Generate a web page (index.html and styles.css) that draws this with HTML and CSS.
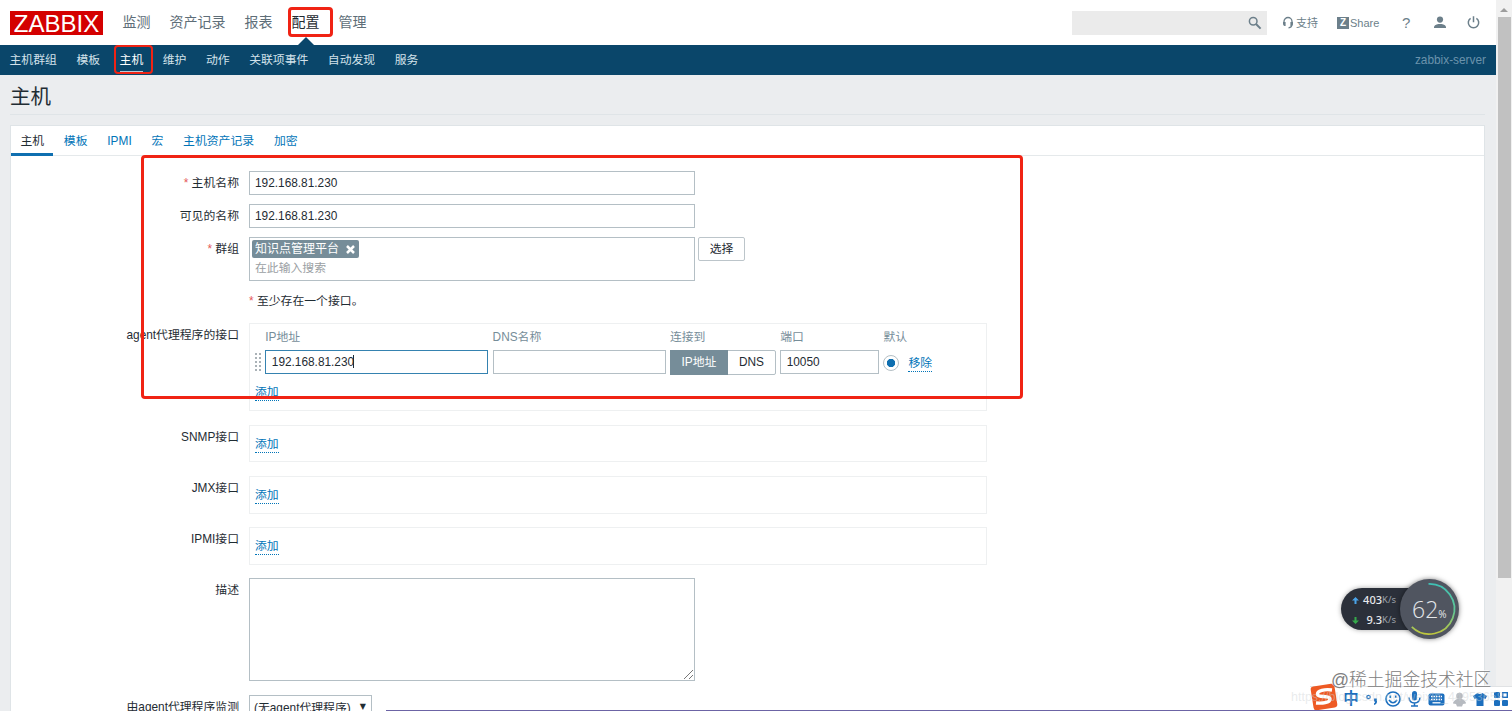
FILE: index.html
```
<!DOCTYPE html>
<html lang="zh-CN">
<head>
    <meta charset="UTF-8">
    <meta name="viewport" content="width=device-width, initial-scale=1.0">
    <title>主机 - Zabbix</title>
    <link rel="stylesheet" href="styles.css">
</head>
<body>

    <div class="window">
        <div class="page">
            <header class="top-bar">
                <div class="logo">ZABBIX</div>
                <nav class="main-nav">
                    <a>监测</a>
                    <a>资产记录</a>
                    <a>报表</a>
                    <a class="selected">配置</a>
                    <a>管理</a>
                </nav>
                <div class="search">
                    <svg width="14" height="14" viewBox="0 0 14 14"><circle cx="5.2" cy="5.2" r="3.8" fill="none" stroke="#6c7f8a" stroke-width="1.5"/><path d="M8 8l4.600 4.600" stroke="#6c7f8a" stroke-width="2"/></svg>
                </div>
                <div class="user-links">
                    <a class="support"><svg width="12" height="13" viewBox="0 0 12 13"><path d="M2 8V5.500a4 4 0 0 1 8 0V8q0 3.500-3.500 3.800" fill="none" stroke="#6c7f8a" stroke-width="1.300"/><path d="M1 6h2.600v4H2.500Q1 9.500 1 8zM11 6H8.400v4h1.100Q11 9.500 11 8z" fill="#6c7f8a"/></svg>支持</a>
                    <a class="share"><span class="z-box">Z</span>Share</a>
                    <a class="help">?</a>
                    <a class="user"><svg width="14" height="13" viewBox="0 0 14 13"><circle cx="7" cy="3.600" r="3.100" fill="#6c7f8a"/><path d="M1 12v-1.500C2 8.500 5 8 7 8s5 .5 6 2.500V12z" fill="#6c7f8a"/></svg></a>
                    <a class="power"><svg width="13" height="13" viewBox="0 0 13 13"><path d="M3.600 2.300a5.200 5.200 0 1 0 5.800 0M6.500.3v6" fill="none" stroke="#6c7f8a" stroke-width="1.500"/></svg></a>
                </div>
            </header>

            <nav class="sub-nav">
                <a>主机群组</a>
                <a>模板</a>
                <a class="selected">主机</a>
                <a>维护</a>
                <a>动作</a>
                <a>关联项事件</a>
                <a>自动发现</a>
                <a>服务</a>
                <span class="server-name">zabbix-server</span>
            </nav>

            <h1>主机</h1>

            <main class="card">
                <div class="tabs">
                    <a class="selected">主机</a>
                    <a>模板</a>
                    <a>IPMI</a>
                    <a>宏</a>
                    <a>主机资产记录</a>
                    <a>加密</a>
                </div>

                <div class="form">
                    <div class="row">
                        <label><i>*</i> 主机名称</label>
                        <div class="text-box wide">192.168.81.230</div>
                    </div>
                    <div class="row">
                        <label>可见的名称</label>
                        <div class="text-box wide">192.168.81.230</div>
                    </div>
                    <div class="row groups">
                        <label><i>*</i> 群组</label>
                        <div class="multiselect">
                            <span class="tag">知识点管理平台<svg width="9" height="9" viewBox="0 0 9 9"><path d="M1 1l7 7M8 1L1 8" stroke="#fff" stroke-width="2.500"/></svg></span>
                            <span class="hint">在此输入搜索</span>
                        </div>
                        <div class="button">选择</div>
                    </div>
                    <div class="row notice">
                        <label></label>
                        <div><i>*</i> 至少存在一个接口。</div>
                    </div>
                    <div class="row spaced">
                        <label>agent代理程序的接口</label>
                        <div class="interfaces full">
                            <div class="columns heads">
                                <span></span><span>IP地址</span><span>DNS名称</span><span>连接到</span><span>端口</span><span>默认</span>
                            </div>
                            <div class="columns">
                                <span class="drag"></span>
                                <div class="text-box focused">192.168.81.230<b class="caret"></b></div>
                                <div class="text-box"></div>
                                <div class="segmented"><span class="on">IP地址</span><span>DNS</span></div>
                                <div class="text-box">10050</div>
                                <div class="default-cell"><span class="radio"></span><a class="link">移除</a></div>
                            </div>
                            <a class="link add">添加</a>
                        </div>
                    </div>
                    <div class="row spaced">
                        <label>SNMP接口</label>
                        <div class="interfaces"><a class="link">添加</a></div>
                    </div>
                    <div class="row spaced">
                        <label>JMX接口</label>
                        <div class="interfaces"><a class="link">添加</a></div>
                    </div>
                    <div class="row spaced">
                        <label>IPMI接口</label>
                        <div class="interfaces"><a class="link">添加</a></div>
                    </div>
                    <div class="row spaced">
                        <label>描述</label>
                        <div class="textarea"><svg width="9" height="9" viewBox="0 0 9 9"><path d="M0 9L9 0M5 9l4-4" stroke="#777" stroke-width="1"/></svg></div>
                    </div>
                    <div class="row">
                        <label>由agent代理程序监测</label>
                        <div class="select">(无agent代理程序)<span>▼</span></div>
                    </div>
                </div>
            </main>
        </div>

        <aside class="scrollbar">
            <div class="arrow"></div>
            <div class="thumb"></div>
        </aside>
    </div>

    <!-- red highlight marks -->
    <div class="mark mark-config"></div>
    <div class="mark mark-hosts"></div>
    <div class="mark mark-form"></div>

    <!-- network speed widget -->
    <div class="speed">
        <div class="rates">
            <div><svg width="7" height="7" viewBox="0 0 7 7"><path d="M3.500 0L7 3.500H4.500V7h-2V3.500H0z" fill="#4aa3e8"/></svg><b>403</b>K/s</div>
            <div><svg width="7" height="7" viewBox="0 0 7 7"><path d="M3.500 7L0 3.500h2.500V0h2v3.500H7z" fill="#35a94a"/></svg><b>9.3</b>K/s</div>
        </div>
        <div class="gauge">
            <svg width="59" height="60" viewBox="0 0 60 60">
                <defs>
                    <linearGradient id="arc" x1="0" y1="0" x2="0" y2="1">
                        <stop offset="0" stop-color="#3fc0b4"/>
                        <stop offset=".55" stop-color="#62c795"/>
                        <stop offset="1" stop-color="#c0c63c"/>
                    </linearGradient>
                </defs>
                <path d="M29 4.500A25.500 25.500 0 1 1 12 48.200" fill="none" stroke="url(#arc)" stroke-width="1.800"/>
            </svg>
            <span class="percent">62<small>%</small></span>
        </div>
    </div>

    <!-- input method bar -->
    <div class="ime">
        <svg class="sogou" width="28" height="28" viewBox="0 0 28 28"><rect x="2" y="2" width="24" height="24" rx="3" fill="#ee5a24" transform="rotate(-9 14 14)"/><path d="M22 7C15 6 7 7.500 7.500 11.500c.8 3.500 12.500.5 12.500 4.500 0 4-8 4.500-14 4" fill="none" stroke="#fff" stroke-width="3.400"/></svg>
        <span class="cn">中</span>
        <svg width="12" height="14" viewBox="0 0 12 14"><circle cx="2.500" cy="5" r="1.700" fill="none" stroke="#1c6fbe" stroke-width="1.200"/><path d="M8 6.500h3v3q0 2.500-3 3.500v-1.500q1-.5 1.200-2H8z" fill="#1c6fbe"/></svg>
        <svg width="16" height="16" viewBox="0 0 16 16"><circle cx="8" cy="8" r="7" fill="none" stroke="#1c6fbe" stroke-width="1.600"/><path d="M5.300 4.500v2.500M10.700 4.500v2.500M4 9q4 5.500 8 0" fill="none" stroke="#1c6fbe" stroke-width="1.600"/></svg>
        <svg width="13" height="16" viewBox="0 0 13 16"><rect x="4" y="0" width="5" height="9.500" rx="2.500" fill="#1c6fbe"/><path d="M1 6.500q.5 5.500 5.500 5.500T12 6.500M6.500 12v3M3 15h7" fill="none" stroke="#1c6fbe" stroke-width="1.500"/></svg>
        <svg width="17" height="13" viewBox="0 0 17 13"><rect x=".5" y=".5" width="16" height="12" rx="2" fill="#1c6fbe"/><path d="M3 3.500h11M3 6.500h11" stroke="#fff" stroke-width="1.300" stroke-dasharray="1.500 1"/><path d="M4.500 9.800h8" stroke="#fff" stroke-width="1.300"/></svg>
        <svg width="13" height="15" viewBox="0 0 13 15"><circle cx="6.500" cy="4" r="3.300" fill="#b6bac0"/><path d="M4 7h5q4 2 4 4.500l-3 .5-1 2.500H4L3 12l-3-.5Q0 9 4 7z" fill="#b6bac0"/></svg>
        <svg width="14" height="14" viewBox="0 0 14 14"><path d="M4.500 1q2.500 2 5 0L14 4l-1.500 3-2-.8V14h-7V6.200l-2 .8L0 4z" fill="#1c6fbe"/></svg>
        <svg width="14" height="14" viewBox="0 0 14 14"><rect width="6" height="6" rx="1" fill="#1c6fbe"/><rect x="8.700" y=".7" width="4.600" height="4.600" fill="none" stroke="#1c6fbe" stroke-width="1.400"/><rect y="8" width="6" height="6" rx="1" fill="#1c6fbe"/><rect x="8" y="8" width="6" height="6" rx="1" fill="#1c6fbe"/></svg>
    </div>
    <div class="blog-url">https://blog.csdn.net/weixin_44953658</div>
    <div class="watermark">@稀土掘金技术社区</div>
    <div class="edge-line"></div>

</body>
</html>
```
FILE: styles.css
```
* {
    box-sizing: border-box;
}

body {
    margin: 0;
    height: 711px;
    overflow: hidden;
    position: relative;
    background-color: #ebedef;
    color: #1f2c33;
    font-family: "Liberation Sans", "Noto Sans CJK SC", sans-serif;
    font-size: 11.85px;
    line-height: 18px;
}

i {
    color: #e45959;
    font-style: normal;
}

svg {
    flex: none;
}

.window {
    display: flex;
    height: 711px;
}

.page {
    width: 1496px;
    display: flex;
    flex-direction: column;
}

/* header */
.top-bar {
    height: 45px;
    flex: none;
    display: flex;
    align-items: center;
    background-color: #fff;
    padding-left: 10px;
}

.logo {
    width: 93px;
    height: 24px;
    background-color: #d40000;
    color: #fff;
    font-size: 24px;
    line-height: 25px;
    text-align: center;
}

.main-nav {
    display: flex;
    gap: 19px;
    margin: -1px 0 0 19.500px;
    font-size: 14px;
    color: #5e6e78;
}

.main-nav .selected {
    color: #1f2c33;
    position: relative;
}

.main-nav .selected::after {
    content: "";
    position: absolute;
    left: 6px;
    top: 24px;
    border: 8px solid transparent;
    border-top: 0;
    border-bottom-color: #0a466a;
}

.search {
    width: 195px;
    height: 24px;
    margin-left: auto;
    padding: 5px;
    display: flex;
    justify-content: flex-end;
    background-color: #ebebeb;
}

.user-links {
    display: flex;
    align-items: center;
    width: 229px;
    padding-left: 15px;
    color: #6c7f8a;
    font-size: 11px;
}

.user-links a {
    display: flex;
    align-items: center;
}

.support {
    gap: 2px;
    width: 55px;
}

.share {
    gap: 1px;
    width: 65px;
}

.z-box {
    width: 12px;
    height: 12px;
    background-color: #6c7f8a;
    color: #fff;
    font-size: 10px;
    line-height: 12px;
    font-weight: bold;
    text-align: center;
}

.help {
    width: 31px;
    font-size: 15px;
}

.user {
    width: 34px;
}

/* second level menu */
.sub-nav {
    height: 30px;
    flex: none;
    display: flex;
    align-items: center;
    gap: 19.500px;
    padding: 0 10px 0 9.500px;
    background-color: #0a466a;
    color: #d3e2eb;
}

.sub-nav .selected {
    color: #fff;
    height: 21px;
    line-height: 18px;
    margin-top: 2px;
    border-bottom: 1px solid #b7cbd8;
}

.server-name {
    margin-left: auto;
    color: #6a93ac;
}

h1 {
    margin: 0 11px 10px 10px;
    height: 40px;
    flex: none;
    font-size: 20.5px;
    font-weight: normal;
    line-height: 44px;
    border-bottom: 1px solid #dfe4e7;
}

.card {
    flex: 1;
    min-height: 0;
    margin: 0 11px 0 10px;
    background-color: #fff;
    border: 1px solid #dfe4e7;
    border-bottom: 0;
}

.tabs {
    display: flex;
    height: 30px;
    gap: 1px;
    border-bottom: 1px solid #e5e9eb;
    color: #0275b8;
}

.tabs a {
    padding: 0 9.400px;
    line-height: 31px;
    height: 30px;
}

.tabs .selected {
    color: #1f2c33;
    border-bottom: 3px solid #0f6fb0;
}

/* form */
.form {
    padding-top: 15px;
}

.row {
    display: flex;
    align-items: flex-start;
    margin-bottom: 9px;
}

.row label {
    width: 228px;
    flex: none;
    margin-right: 10px;
    padding-top: 3px;
    text-align: right;
    white-space: nowrap;
}

.row.spaced {
    margin-bottom: 13.500px;
}

.text-box {
    height: 24px;
    padding: 0 5.500px;
    border: 1px solid #b4bfc5;
    background-color: #fff;
    line-height: 22px;
}

.wide {
    width: 446px;
}

.wide,
.multiselect {
    padding-left: 5px;
}

.multiselect {
    width: 446px;
    height: 44px;
    padding: 2px;
    display: flex;
    flex-direction: column;
    align-items: flex-start;
    border: 1px solid #b4bfc5;
}

.tag {
    display: flex;
    align-items: center;
    height: 18px;
    padding: 0 4px 0 3px;
    gap: 7px;
    border-radius: 2px;
    background-color: #768d99;
    color: #fff;
    font-size: 12px;
}

.hint {
    padding-left: 3px;
    line-height: 21px;
    color: #9aa0a3;
}

.button {
    width: 47px;
    height: 24px;
    margin-left: 3px;
    border: 1px solid #bcc5ca;
    border-radius: 2px;
    text-align: center;
    line-height: 23px;
}

.row.groups {
    margin-bottom: 11px;
}

.row.notice {
    height: 19px;
    margin-bottom: 12px;
}

.interfaces {
    width: 738px;
    height: 37.800px;
    padding: 9px 5px;
    border: 1px solid #eef0f1;
}

.interfaces.full {
    height: 88px;
    padding: 4px 3px;
}

.columns {
    display: grid;
    grid-template-columns: 8px 223px 173px 106px 99px auto;
    column-gap: 4.300px;
    height: 24px;
}

.heads {
    height: 22px;
    color: #768d99;
}

.drag {
    width: 8px;
    height: 20px;
    margin: 2px 0 0 1px;
    background-image: radial-gradient(circle, #aab2b7 1px, transparent 1.300px);
    background-size: 4px 4px;
}

.focused {
    border-color: #3582b0;
}

.caret {
    display: inline-block;
    width: 1px;
    height: 13px;
    margin-left: -1px;
    background-color: #1f2c33;
    vertical-align: -2px;
}

.segmented {
    display: flex;
    border: 1px solid #b4bfc5;
    border-radius: 2px;
    line-height: 23px;
    text-align: center;
}

.segmented span {
    flex: 1;
}

.segmented .on {
    flex: none;
    width: 58px;
    margin: -1px 0 -1px -1px;
    padding-top: 1px;
    background-color: #768d99;
    color: #fff;
}

.default-cell {
    display: flex;
    align-items: center;
    gap: 9px;
}

.radio {
    width: 16px;
    height: 16px;
    border: 1px solid #b4bfc5;
    border-radius: 50%;
    background: radial-gradient(circle, #0f6fb0 3.800px, #fff 4.500px);
}

.link {
    display: inline-block;
    height: 18px;
    color: #0275b8;
    border-bottom: 1px dotted #0275b8;
}

.add {
    margin: 9px 0 0 2px;
}

.textarea {
    width: 446px;
    height: 103px;
    padding: 1px;
    display: flex;
    align-items: flex-end;
    justify-content: flex-end;
    border: 1px solid #b4bfc5;
}

.select {
    width: 123px;
    height: 24px;
    padding: 0 5px 0 4px;
    display: flex;
    justify-content: space-between;
    border: 1px solid #b4bfc5;
    line-height: 24px;
    white-space: nowrap;
}

.select span {
    font-family: "DejaVu Sans", sans-serif;
    font-size: 8px;
    line-height: 22px;
}

/* browser scrollbar */
.scrollbar {
    width: 16px;
    display: flex;
    flex-direction: column;
    align-items: center;
    background-color: #f1f1f1;
}

.arrow {
    margin-top: 8px;
    border: 4px solid transparent;
    border-top: 0;
    border-bottom-color: #9d9d9d;
}

.thumb {
    width: 13px;
    height: 561px;
    margin-top: 5px;
    background-color: #c1c1c1;
}

/* highlight marks over the page */
.mark {
    position: absolute;
    border: 3px solid #f02314;
    border-radius: 4px;
}

.mark-config {
    left: 288px;
    top: 7px;
    width: 45px;
    height: 30px;
}

.mark-hosts {
    left: 114px;
    top: 45px;
    width: 39px;
    height: 29px;
    border-width: 2.500px;
}

.mark-form {
    left: 141px;
    top: 155px;
    width: 882px;
    height: 244px;
}

/* speed widget */
.speed {
    position: absolute;
    left: 1341px;
    top: 579px;
    display: flex;
    align-items: center;
    font-family: "Noto Sans", sans-serif;
}

.rates {
    width: 80px;
    height: 42px;
    margin-right: -20px;
    padding: 2px 0 0 11px;
    border-radius: 21px 0 0 21px;
    background-color: #2b303a;
    box-shadow: 0 0 5px rgba(0, 0, 0, 0.35);
    color: #9ba0a8;
    font-size: 9.500px;
}

.rates div {
    display: flex;
    align-items: center;
    height: 20px;
}

.rates b {
    width: 21px;
    margin-left: 2px;
    color: #e7e9ec;
    font-size: 11px;
    font-weight: 500;
    text-align: right;
}

.gauge {
    width: 59px;
    height: 60px;
    position: relative;
    left: -1px;
    border-radius: 50%;
    background-color: #505560;
    box-shadow: 0 0 5px rgba(0, 0, 0, 0.5);
}

.percent {
    position: absolute;
    left: 12px;
    top: 15px;
    color: #e4e7ea;
    font-family: "Open Sans", sans-serif;
    font-size: 23px;
    font-weight: 300;
    line-height: 30px;
}

.percent small {
    font-size: 10px;
    font-weight: normal;
}

/* input method bar, glued to the bottom right corner */
.ime {
    position: absolute;
    left: 1310px;
    top: 686px;
    width: 202px;
    height: 25px;
    display: flex;
    align-items: center;
    gap: 7.300px;
    border-top: 1px solid #e0e2e4;
    background-color: #fff;
}

.sogou {
    margin-top: -4px;
}

.cn {
    width: 15px;
    margin-left: -2px;
    color: #1c6fbe;
    font-size: 15.500px;
    font-weight: bold;
}

.blog-url {
    position: absolute;
    left: 1291px;
    top: 688px;
    width: 221px;
    color: rgba(205, 210, 213, 0.45);
    font-size: 12.500px;
    white-space: nowrap;
}

.watermark {
    position: absolute;
    left: 1331px;
    top: 668px;
    color: #808080;
    font-size: 17.800px;
    font-weight: 300;
    line-height: 24px;
    white-space: nowrap;
    text-shadow: -1px -1px 0 rgba(255, 255, 255, 0.8);
}

.edge-line {
    position: absolute;
    left: 386px;
    right: 0;
    bottom: 0;
    height: 1px;
    background-color: #6c64a5;
}
```
